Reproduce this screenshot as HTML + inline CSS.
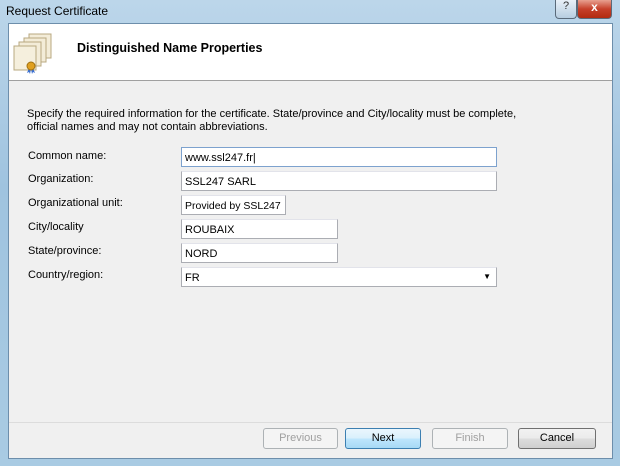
<!DOCTYPE html>
<html><head><style>
*{margin:0;padding:0;box-sizing:border-box}
body{width:620px;height:466px;overflow:hidden;font-family:"Liberation Sans",sans-serif;font-size:11px;color:#000;position:relative;background:linear-gradient(180deg,#bcd6ea 0%,#9fc3df 40%,#a9cbe3 100%)}
.t{position:absolute;left:6px;top:4px;font-size:12px;color:#000}
.win{position:absolute;left:8px;top:23px;width:605px;height:436px;background:#f0f0f0;border:1px solid #6d8eab}
.hdr{position:absolute;left:0;top:0;width:100%;height:57px;background:#fff;border-bottom:1px solid #a0a0a0}
.hdr b{position:absolute;left:68px;top:17px;font-size:12.5px}
.a{position:absolute;white-space:nowrap}
.lbl{position:absolute;left:19px;white-space:nowrap}
.in{position:absolute;background:#fff;border:1px solid #abadb3;border-top-color:#e2e3ea;padding:4px 0 0 3px;height:20px;white-space:nowrap;overflow:hidden}
.btn{position:absolute;top:404px;height:21px;border:1px solid #707070;border-radius:3px;background:linear-gradient(#f2f2f2,#ebebeb 50%,#dddddd 51%,#cfcfcf);text-align:center;line-height:19px}
.dis{border-color:#adb2b5;background:#f4f4f4;color:#a0a0a0}
.cb{position:absolute;top:0;height:19px;border:1px solid #5a6a7a;border-top:none;border-radius:0 0 4px 4px}
</style></head><body>
<div class="t">Request Certificate</div>
<div class="cb" style="left:555px;width:22px;background:linear-gradient(#e8f0f8,#b7cde0);text-align:center;font-size:11px;color:#333">?</div>
<div class="cb" style="left:577px;width:35px;background:linear-gradient(#e8a090,#c6402a 50%,#b22a10);text-align:center;color:#fff;font-weight:bold;font-size:12px">x</div>
<div class="win">
<div class="hdr">
<svg class="a" style="left:4px;top:8px" width="46" height="42">
<rect x="16" y="2" width="22" height="24" fill="#f3ecd8" stroke="#b8a880"/>
<rect x="11" y="6" width="22" height="24" fill="#f3ecd8" stroke="#b8a880"/>
<rect x="6" y="10" width="22" height="24" fill="#f3ecd8" stroke="#b8a880"/>
<rect x="1" y="14" width="22" height="24" fill="#f5efdd" stroke="#b8a880"/>
<path d="M16 36l-2 5 2-1 1 2 1-5M20 36l2 5-2-1-1 2-1-5" fill="#3a6fd0"/>
<circle cx="18" cy="34" r="4" fill="#e0a020" stroke="#a07010"/>
</svg>
<b>Distinguished Name Properties</b>
</div>
<div class="a" style="left:18px;top:84px;line-height:13px">Specify the required information for the certificate. State/province and City/locality must be complete,<br>official names and may not contain abbreviations.</div>
<div class="lbl" style="top:126px">Common name:</div>
<div class="lbl" style="top:149px">Organization:</div>
<div class="lbl" style="top:173px">Organizational unit:</div>
<div class="lbl" style="top:197px">City/locality</div>
<div class="lbl" style="top:221px">State/province:</div>
<div class="lbl" style="top:245px">Country/region:</div>
<div class="in" style="left:172px;top:123px;width:316px;border-color:#7da2ce">www.ssl247.fr|</div>
<div class="in" style="left:172px;top:147px;width:316px">SSL247 SARL</div>
<div class="in" style="left:172px;top:171px;width:105px;font-size:10.5px">Provided by SSL247</div>
<div class="in" style="left:172px;top:195px;width:157px">ROUBAIX</div>
<div class="in" style="left:172px;top:219px;width:157px">NORD</div>
<div class="in" style="left:172px;top:243px;width:316px">FR<span style="position:absolute;right:5px;top:4px;font-size:8px">▼</span></div>
<div class="a" style="left:0;top:398px;width:100%;border-top:1px solid #dcdcdc"></div>
<div class="btn dis" style="left:254px;width:75px">Previous</div>
<div class="btn" style="left:336px;width:76px;border-color:#3c7fb1;background:linear-gradient(#eaf6fd,#d9f0fc 50%,#bee6fd 51%,#a7d9f5)">Next</div>
<div class="btn dis" style="left:423px;width:76px">Finish</div>
<div class="btn" style="left:509px;width:78px">Cancel</div>
</div>
</body></html>
